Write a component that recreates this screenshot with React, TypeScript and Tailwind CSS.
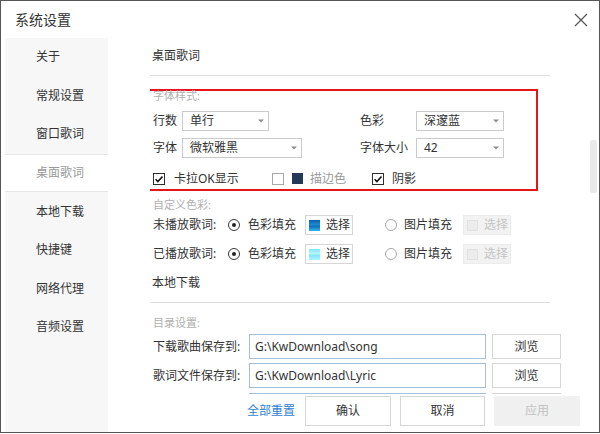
import React from "react";

const FONT = "font-['Noto_Sans','Noto_Sans_CJK_SC',sans-serif]";

function Arrow() {
  return (
    <svg width="6" height="4" viewBox="0 0 6 4">
      <path d="M0 0.5h6L3 3.5z" fill="#8c8c8c" />
    </svg>
  );
}

function Select({ className, value }: { className: string; value: string }) {
  return (
    <div
      className={`${className} h-[20px] border border-[#cacaca] bg-white flex items-center justify-between pl-[7px] pr-[4px]`}
    >
      <span className="leading-none">{value}</span>
      <Arrow />
    </div>
  );
}

function Check({ checked }: { checked: boolean }) {
  return checked ? (
    <span className="w-[12px] h-[12px] border border-[#2f2f2f] bg-white flex items-center justify-center shrink-0">
      <svg width="10" height="10" viewBox="0 0 10 10">
        <path d="M1.6 5.2l2.3 2.3 4.6-5" stroke="#111" strokeWidth="1.6" fill="none" />
      </svg>
    </span>
  ) : (
    <span className="block w-[12px] h-[12px] border border-[#a8a8a8] bg-white shrink-0" />
  );
}

function Radio({ on }: { on: boolean }) {
  return on ? (
    <span className="w-[12px] h-[12px] rounded-full border border-[#3a3a3a] flex items-center justify-center shrink-0">
      <span className="block w-[4px] h-[4px] rounded-full bg-[#222]" />
    </span>
  ) : (
    <span className="block w-[12px] h-[12px] rounded-full border border-[#a8a8a8] shrink-0" />
  );
}

function ColorRow({ label, swatch }: { label: string; swatch: string }) {
  return (
    <div className="flex items-center h-[20px] pl-[3px]">
      <span className="w-[75px]">{label}</span>
      <Radio on />
      <span className="ml-[8px] w-[57px]">色彩填充</span>
      <div className="w-[48px] h-[20px] border border-[#d6d6d6] bg-white flex items-center pl-[3px]">
        <span className={`block w-[11px] h-[11px] ${swatch}`} />
        <span className="ml-[6px]">选择</span>
      </div>
      <div className="ml-[32px]">
        <Radio on={false} />
      </div>
      <span className="ml-[7px] w-[59px]">图片填充</span>
      <div className="w-[48px] h-[20px] border border-[#ececec] bg-[#f2f2f2] flex items-center pl-[3px] text-[#c4c4c4]">
        <span className="block w-[11px] h-[11px] border border-[#e2e2e2] bg-[#ececec]" />
        <span className="ml-[6px]">选择</span>
      </div>
    </div>
  );
}

function PathRow({ label, value }: { label: string; value: string }) {
  return (
    <div className="flex items-center h-[25px] pl-[3px]">
      <span className="w-[96px]">{label}</span>
      <div className="w-[237px] h-[25px] border border-[#a6bfd6] bg-white flex items-center pl-[5px] text-[12px]">
        {value}
      </div>
      <div className="ml-[6px] w-[69px] h-[25px] border border-[#d6d6d6] bg-white flex items-center justify-center">
        浏览
      </div>
    </div>
  );
}

const NAV = ["关于", "常规设置", "窗口歌词", "桌面歌词", "本地下载", "快捷键", "网络代理", "音频设置"];

export default function App() {
  return (
    <div className={`w-[600px] h-[434px] bg-white ${FONT} text-[12px] text-[#333]`}>
      <div className="relative w-[600px] h-[433px] border border-[#565656] flex flex-col overflow-hidden">
        {/* title bar */}
        <div className="h-[37px] shrink-0 flex items-center justify-between pl-[14px] pr-[11px]">
          <span className="text-[14px] text-[#333] leading-none">系统设置</span>
          <svg width="14" height="14" viewBox="0 0 14 14">
            <path d="M1 1L13 13M13 1L1 13" stroke="#555" strokeWidth="1.2" fill="none" />
          </svg>
        </div>

        {/* body */}
        <div className="flex flex-1 min-h-0">
          <div className="ml-[4px] w-[103px] bg-[#f7f7f7] flex flex-col">
            {NAV.map((n) =>
              n === "桌面歌词" ? (
                <div
                  key={n}
                  className="h-[38.6px] bg-white border-y border-[#e6e6e6] flex items-center pl-[31px] text-[#9a9a9a]"
                >
                  {n}
                </div>
              ) : (
                <div key={n} className="h-[38.6px] flex items-center pl-[31px]">
                  {n}
                </div>
              )
            )}
          </div>

          <div className="ml-[42px] w-[412px] flex flex-col overflow-hidden">
            <div className="h-[37px] shrink-0 flex items-center pb-[2px] pl-[2px]">桌面歌词</div>
            <div className="h-px w-[400px] bg-[#dedede] shrink-0" />

            {/* red box */}
            <div className="mt-[13px] -ml-[7px] w-[395px] h-[102px] shrink-0 border-2 border-[#e8141c] pl-[8px] flex flex-col">
              <div className="h-[9px] leading-[9px] text-[11px] text-[#b0b0b0]">字体样式:</div>
              <div className="mt-[11px] flex items-center h-[20px]">
                <span className="w-[29px]">行数</span>
                <Select className="w-[87px]" value="单行" />
                <span className="ml-[91px] w-[56px]">色彩</span>
                <Select className="w-[88px]" value="深邃蓝" />
              </div>
              <div className="mt-[7px] flex items-center h-[20px]">
                <span className="w-[29px]">字体</span>
                <Select className="w-[120px]" value="微软雅黑" />
                <span className="ml-[58px] w-[56px]">字体大小</span>
                <Select className="w-[88px]" value="42" />
              </div>
              <div className="mt-[14px] flex items-center h-[13px]">
                <div className="w-[119px] flex items-center">
                  <Check checked />
                  <span className="ml-[9px]">卡拉OK显示</span>
                </div>
                <div className="w-[100px] flex items-center">
                  <Check checked={false} />
                  <span className="block ml-[8px] w-[11px] h-[11px] bg-[#243a58]" />
                  <span className="ml-[7px] text-[#9a9a9a]">描边色</span>
                </div>
                <Check checked />
                <span className="ml-[8px]">阴影</span>
              </div>
            </div>

            <div className="mt-[8px] h-[11px] leading-[11px] text-[11px] text-[#b0b0b0] shrink-0 pl-[3px]">自定义色彩:</div>
            <div className="mt-[5px] shrink-0">
              <ColorRow
                label="未播放歌词:"
                swatch="bg-[linear-gradient(to_bottom,#0b5fa8,#1b8fd6_45%,#0a6cb8_55%,#35b7ee)]"
              />
            </div>
            <div className="mt-[9px] shrink-0">
              <ColorRow
                label="已播放歌词:"
                swatch="bg-[linear-gradient(to_bottom,#7fe7fb,#b9f6ff_45%,#7ee6fa_55%,#aef3ff)]"
              />
            </div>

            <div className="mt-[12px] h-[14px] leading-[14px] shrink-0 pl-[2px]">本地下载</div>
            <div className="mt-[12px] h-px w-[400px] bg-[#dedede] shrink-0" />
            <div className="mt-[14px] h-[11px] leading-[11px] text-[11px] text-[#b0b0b0] shrink-0 pl-[3px]">目录设置:</div>
            <div className="mt-[6px] shrink-0">
              <PathRow label="下载歌曲保存到:" value="G:\KwDownload\song" />
            </div>
            <div className="mt-[4px] shrink-0">
              <PathRow label="歌词文件保存到:" value="G:\KwDownload\Lyric" />
            </div>
            {/* next row, hidden under the footer */}
            <div className="mt-[5px] shrink-0 flex h-[25px] pl-[3px]">
              <div className="ml-[96px] w-[237px] h-[25px] border border-[#a6bfd6]" />
              <div className="ml-[6px] w-[69px] h-[25px] border border-[#d6d6d6]" />
            </div>
          </div>
        </div>

        {/* scrollbar */}
        <div className="absolute left-[589px] top-[139px] w-[7px] h-[53px] rounded-[2px] bg-[#e9e9e9]" />

        {/* footer */}
        <div className="absolute left-[109px] right-[2px] top-[393px] h-[38px] bg-white flex items-start pt-[2px]">
          <span className="ml-[137px] w-[58px] h-[30px] flex items-center text-[#2f7fd3]">全部重置</span>
          <div className="w-[86px] h-[30px] border border-[#d6d6d6] bg-white flex items-center justify-center">确认</div>
          <div className="ml-[9px] w-[85px] h-[30px] border border-[#d6d6d6] bg-white flex items-center justify-center">取消</div>
          <div className="ml-[9px] w-[86px] h-[30px] bg-[#f0f0f0] flex items-center justify-center text-[#c2c2c2]">应用</div>
        </div>
      </div>
    </div>
  );
}
